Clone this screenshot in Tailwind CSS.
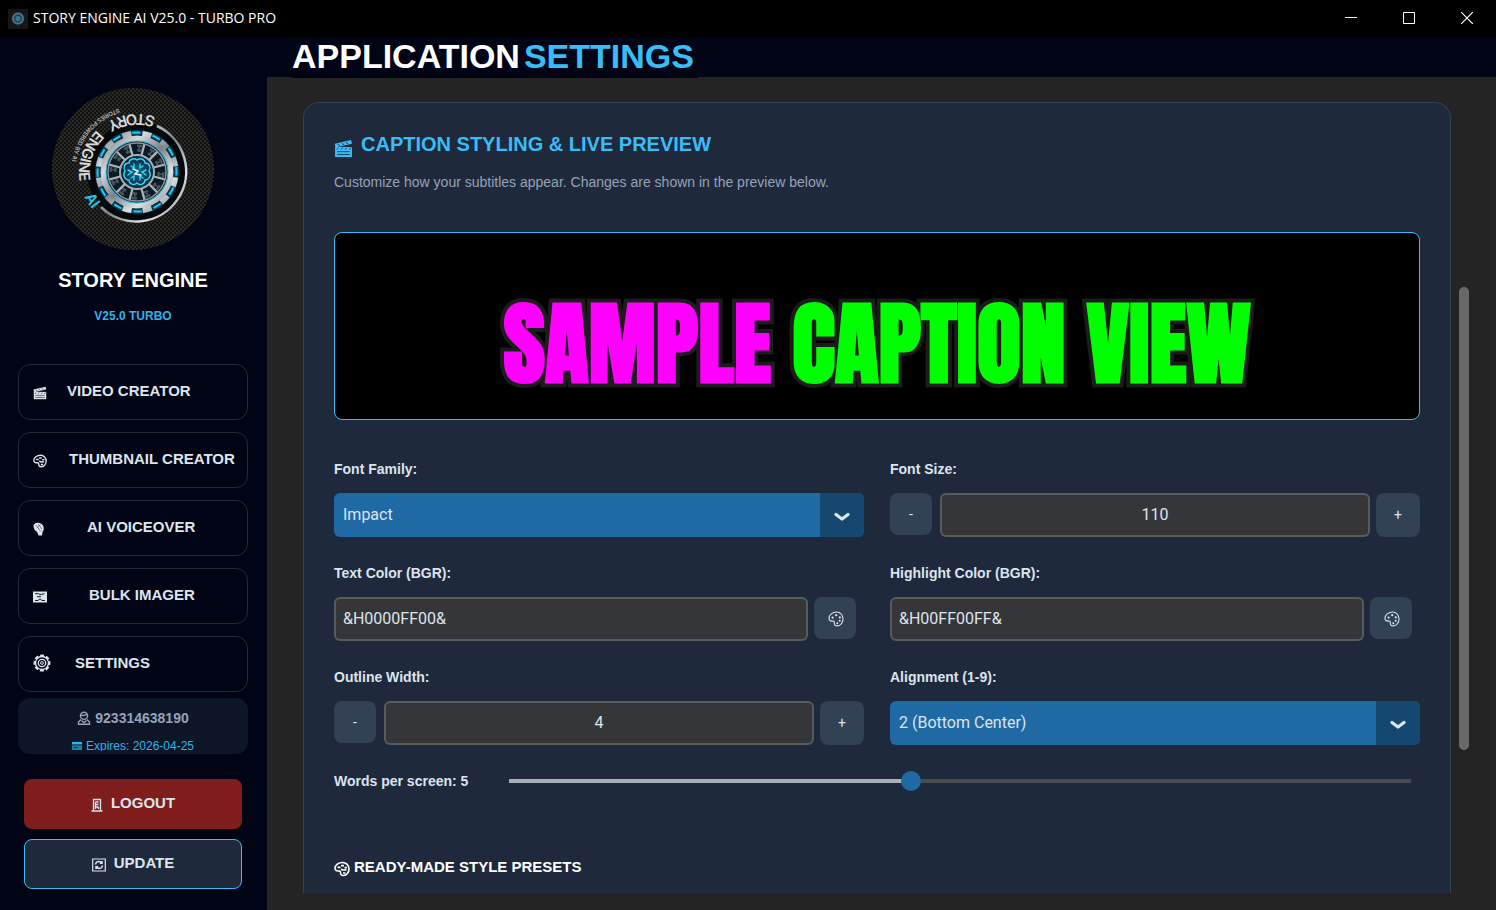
<!DOCTYPE html>
<html lang="en">
<head>
    <meta charset="UTF-8">
    <meta name="viewport" content="width=device-width, initial-scale=1.0">
    <title>STORY ENGINE AI V25.0 - TURBO PRO</title>
    <script src="https://cdn.jsdelivr.net/npm/@tailwindcss/browser@4"></script>
</head>
<body class="h-screen overflow-hidden flex flex-col bg-[#242424] font-['Liberation_Sans',Arial,sans-serif] text-[#dce4ee]">

    <!-- shared icons -->
    <svg class="hidden" aria-hidden="true">
        <symbol id="clapper" viewBox="0 0 18 18">
            <path d="M1 7.500h16V17H1z" fill="currentColor"/>
            <path d="M.6 4.600 16.200 1l.8 3.400L1.400 8z" fill="currentColor"/>
            <path d="M3.500 5.200l2.300 1.200M7.300 4.200l2.300 1.200M11.200 3.300l2.300 1.200M4 8.200 2.800 10M8 8.200 6.800 10M12 8.200 10.800 10M16 8.200 14.800 10M3 12h12M3 14.700h12" stroke="#1e293b" stroke-width=".8" fill="none"/>
        </symbol>
        <symbol id="palette" viewBox="0 0 16 16">
            <path d="M8.600 1C4.600 1 1 3.800 1 7.200c0 2.300 1.500 3 3.200 2.900 1.500-.1 2.300.1 2.100 1.500-.3 2 .9 3.400 3 3.300 3.300-.2 5.700-3.200 5.700-6.900C15 4 12.300 1 8.600 1z" fill="none" stroke="currentColor" stroke-width="1.100"/>
            <g fill="currentColor"><circle cx="4.600" cy="6.600" r="1.100"/><circle cx="8.200" cy="4.200" r="1.100"/><circle cx="11.800" cy="6.400" r="1.100"/><circle cx="11.700" cy="9.800" r="1"/><circle cx="9.300" cy="12.200" r="1"/></g>
        </symbol>
        <symbol id="palette-bold" viewBox="0 0 16 16">
            <path d="M8.600 1.500C4.600 1.500 1 4 1 7.200c0 2.100 1.500 2.900 3.200 2.800 1.500-.1 2.500.1 2.300 1.500-.2 1.900 1 3.100 2.900 3 3.200-.2 5.600-3 5.600-6.500 0-3.600-2.700-6.500-6.400-6.500z" fill="none" stroke="currentColor" stroke-width="1.600"/>
            <path d="M3.500 6.400h3M7 4.600h3M10.500 6.600h2.500M7 8.200l2 .8 3.500-.2M9 12h2.500" stroke="currentColor" stroke-width="1.700"/>
        </symbol>
        <symbol id="mic" viewBox="0 0 12 14">
            <path d="M.5 4C.5 2 2.500.5 5 .7c2.800.2 4.800 1.500 5.500 4 .6 2.200.1 4.200-1 5.300L9 13.500H5.500L4.200 10C1.800 8.500.5 6.500.5 4z" fill="currentColor"/>
            <path d="M2.800 3 7.800 9.500M5.500 2.200l3.500 5M4.500 5 7.500 2.800" stroke="#475569" stroke-width=".7"/>
        </symbol>
        <symbol id="imager" viewBox="0 0 14 12">
            <path d="M0 .5h14v11H0z" fill="currentColor"/>
            <path d="M2 2.700h3.500l1.500 1L11.500 2.700M4 5.700h4M2 9.500h3l2-1.700 2 1.700h3" stroke="#020617" stroke-width=".9" fill="none"/>
        </symbol>
        <symbol id="gear" viewBox="0 0 18 18">
            <circle cx="9" cy="9" r="7.500" fill="none" stroke="currentColor" stroke-width="2" pathLength="16" stroke-dasharray="1.300 .7" transform="rotate(-14 9 9)"/>
            <circle cx="9" cy="9" r="6.500" fill="none" stroke="currentColor" stroke-width="1.300"/>
            <circle cx="9" cy="9" r="3.700" fill="none" stroke="currentColor" stroke-width="1.300"/>
            <circle cx="9" cy="9" r="1.400" fill="none" stroke="currentColor" stroke-width="1"/>
        </symbol>
        <symbol id="chevron" viewBox="0 0 16 10">
            <path d="M2 2.500 8 7l6-4.500" fill="none" stroke="currentColor" stroke-width="3.200" stroke-linecap="round" stroke-linejoin="round"/>
        </symbol>
    </svg>

    <!-- title bar -->
    <header class="h-[37px] shrink-0 bg-black flex items-center text-white">
        <svg class="ml-2 size-5" viewBox="0 0 20 20" aria-hidden="true">
            <rect width="20" height="20" fill="#151716"/>
            <circle cx="10" cy="9.500" r="6.500" fill="#28414d"/>
            <circle cx="10" cy="9.500" r="5" fill="none" stroke="#56798a" stroke-width="1.500"/>
            <circle cx="10" cy="9.500" r="2.500" fill="#2a7f9e"/>
        </svg>
        <span class="ml-[5px] pb-px grow text-sm font-['Open_Sans','Noto_Sans',sans-serif]">STORY ENGINE AI V25.0 - TURBO PRO</span>
        <div class="h-full flex pb-px">
            <button class="w-[58px] h-full flex items-center justify-center" aria-label="Minimize">
                <svg class="size-3" viewBox="0 0 12 12"><path d="M0 5.500h12" stroke="#fff"/></svg>
            </button>
            <button class="w-[58px] h-full flex items-center justify-center" aria-label="Maximize">
                <svg class="size-3" viewBox="0 0 12 12"><path d="M.5.500h11v11H.5z" fill="none" stroke="#fff"/></svg>
            </button>
            <button class="w-[58px] h-full flex items-center justify-center" aria-label="Close">
                <svg class="size-3" viewBox="0 0 12 12"><path d="M0 0l12 12M12 0 0 12" stroke="#fff" stroke-width="1.200"/></svg>
            </button>
        </div>
    </header>

    <div class="grow min-h-0 flex">
        <!-- sidebar -->
        <aside class="w-[267px] shrink-0 bg-[#000414] flex flex-col items-center pt-[51px] pr-px">
            <svg class="size-[162px] shrink-0" viewBox="0 0 162 162" role="img" aria-label="Story Engine AI logo">
                <defs>
                    <pattern id="mesh" width="4" height="4" patternUnits="userSpaceOnUse">
                        <rect width="4" height="4" fill="#121211"/>
                        <rect width="2" height="2" fill="#2b2b29"/>
                        <rect x="2" y="2" width="2" height="2" fill="#262624"/>
                    </pattern>
                    <linearGradient id="steel" x1="0" y1="0" x2="1" y2="1">
                        <stop offset="0" stop-color="#6d7478"/><stop offset=".25" stop-color="#d5dadd"/>
                        <stop offset=".5" stop-color="#7b8388"/><stop offset=".75" stop-color="#dfe3e5"/>
                        <stop offset="1" stop-color="#7f878c"/>
                    </linearGradient>
                    <radialGradient id="glow">
                        <stop offset="0" stop-color="#0b6f92"/><stop offset="1" stop-color="#03202d"/>
                    </radialGradient>
                    <!-- counter-clockwise arcs carrying the lettering -->
                    <path id="arc-in" d="M103.500 29A58 58 0 0 0 27 84A58 58 0 0 0 85 142"/>
                    <path id="arc-out" d="M67 20.500A66 66 0 0 0 19 84A66 66 0 0 0 40 132"/>
                </defs>
                <circle cx="81" cy="81" r="81" fill="url(#mesh)"/>
                <circle cx="85" cy="84" r="50" fill="#05090c"/>
                <path d="M105 38A50 50 0 1 1 49 119" fill="none" stroke="url(#steel)" stroke-width="2.500"/>
                <g transform="translate(85 84)">
                    <circle r="42" fill="#04151f"/>
                    <circle r="39.500" fill="none" stroke="#11a5d8" stroke-width="5" opacity=".3"/>
                    <circle r="37.500" fill="none" stroke="url(#steel)" stroke-width="8" pathLength="24" stroke-dasharray=".9 1.100" transform="rotate(8)"/>
                    <circle r="39.500" fill="none" stroke="#27c8f7" stroke-width="2" pathLength="24" stroke-dasharray=".8 1.200" transform="rotate(23)"/>
                    <circle r="33.500" fill="none" stroke="url(#steel)" stroke-width="6"/>
                    <circle r="31" fill="#0c1a22" stroke="#3fb4dc" stroke-width="1.100"/>
                    <circle r="24" fill="none" stroke="#46555f" stroke-width="7" pathLength="48" stroke-dasharray="1.600 2.400"/>
                    <circle r="24" fill="none" stroke="#0e1d27" stroke-width="2.500" pathLength="96" stroke-dasharray="1 1"/>
                    <g stroke="#aeb5b9" stroke-width="2.200" transform="rotate(15)">
                        <path d="M0-29V29M-29 0H29M-25-14.500 25 14.500M-14.500-25 14.500 25M14.500-25-14.500 25M25-14.500-25 14.500"/>
                    </g>
                    <circle r="29" fill="none" stroke="#8b949a" stroke-width="1.500"/>
                    <circle r="17" fill="url(#glow)" stroke="#a5adb2" stroke-width="2"/>
                    <g fill="none" stroke="#35d6ff" stroke-width="1.400" stroke-linecap="round">
                        <path d="M0-12C-4-15-8-12-8-9-13-9-14-4-12-1-15 3-12 8-8 8-8 12-3 14 0 11 3 14 8 12 8 8 12 8 15 3 12-1 14-4 13-9 8-9 8-12 4-15 0-12z"/>
                        <path d="M-3-8v4l-3-2M3-8v4l3-2M-9-2l4 2-4 3M9-2 5 0l4 3M-3 8V4l-3 2M3 8V4l3 2"/>
                        <path d="M-4-3 1-1-2 2 4 3" stroke="#d9fbff" stroke-width="1.600"/>
                    </g>
                </g>
                <g class="font-[Inter,sans-serif]">
                    <g font-size="15" font-weight="600" fill="#d6d8d8">
                        <text><textPath href="#arc-in">STORY</textPath></text>
                        <text><textPath href="#arc-in" startOffset="63">ENGINE</textPath></text>
                        <text fill="#27c4e8"><textPath href="#arc-in" startOffset="135">AI</textPath></text>
                    </g>
                    <text font-size="6" font-weight="600" fill="#b4b6b6"><textPath href="#arc-out">STORIES POWERED BY AI</textPath></text>
                </g>
            </svg>
            <h2 class="mt-4.5 text-xl leading-6 font-bold text-white">STORY ENGINE</h2>
            <p class="mt-3.5 text-xs leading-5 font-bold text-[#2eb2ee]">V25.0 TURBO</p>

            <nav class="mt-[38px] w-[230px] flex flex-col gap-3 text-[15px] leading-5 font-bold">
                <a href="#" class="h-14 flex items-center gap-5 pl-3.5 pb-0.5 border border-[#1e293b] rounded-xl"><svg class="mt-1 size-3.5"><use href="#clapper"/></svg>VIDEO CREATOR</a>
                <a href="#" class="h-14 flex items-center gap-[22px] pl-3.5 pb-0.5 border border-[#1e293b] rounded-xl whitespace-nowrap"><svg class="mt-1 size-3.5"><use href="#palette-bold"/></svg>THUMBNAIL CREATOR</a>
                <a href="#" class="h-14 flex items-center gap-[42px] pl-3.5 pb-0.5 border border-[#1e293b] rounded-xl"><svg class="mt-1 w-3 h-3.5"><use href="#mic"/></svg>AI VOICEOVER</a>
                <a href="#" class="h-14 flex items-center gap-[42px] pl-3.5 pb-0.5 border border-[#1e293b] rounded-xl"><svg class="mt-1 w-3.5 h-3"><use href="#imager"/></svg>BULK IMAGER</a>
                <a href="#" class="h-14 flex items-center gap-6 pl-3.5 pb-0.5 border border-[#1e293b] rounded-xl"><svg class="size-4.5"><use href="#gear"/></svg>SETTINGS</a>
            </nav>

            <div class="mt-1.5 w-[230px] h-14 shrink-0 overflow-hidden bg-[#0d1627] rounded-xl pt-2.5 flex flex-col items-center">
                <p class="flex items-center gap-1 text-sm leading-5 font-bold text-[#94a3b8]">
                    <svg class="size-3.5" viewBox="0 0 14 14" fill="none" stroke="currentColor" stroke-width="1.400" aria-hidden="true"><circle cx="7" cy="4.800" r="3.600"/><path d="M3.800 4.200c2 .6 4.500.2 6.400-1M4 8.500 1.500 11v2.300h11V11L10 8.500M4.500 9.500l2.500 2 2.500-2"/></svg>
                    923314638190
                </p>
                <div class="mt-2 h-[15px] overflow-hidden">
                    <p class="flex items-center gap-1 text-xs leading-5 text-[#2eb2ee]">
                        <svg class="w-2.5 h-2" viewBox="0 0 10 8" aria-hidden="true"><path d="M0 0h10v8H0z" fill="#1d7ea6"/><path d="M0 0h10v2H0z" fill="currentColor"/><path d="M0 3h10M1.500 5.500h4" stroke="#0f3a55"/></svg>
                        Expires: 2026-04-25
                    </p>
                </div>
            </div>

            <button class="mt-[25px] w-[218px] h-[50px] shrink-0 pb-0.5 bg-[#7f1d1d] rounded-lg flex items-center justify-center gap-2 text-[15px] leading-5 font-bold">
                <svg class="mt-1 w-3 h-3.5" viewBox="0 0 12 14" fill="none" stroke="currentColor" stroke-width="1.300" aria-hidden="true"><path d="M2.500 13V1.500h7V13M.5 13h11M4.500 4h3M4.500 6.500h3M4.500 9h3M4.500 4v7M7.500 9v2"/></svg>
                LOGOUT
            </button>
            <button class="mt-2.5 w-[218px] h-[50px] shrink-0 pb-0.5 bg-[#1e293b] border border-[#38bdf8] rounded-lg flex items-center justify-center gap-2 text-[15px] leading-5 font-bold">
                <svg class="mt-1 size-3.5" viewBox="0 0 14 14" fill="none" stroke="currentColor" aria-hidden="true"><path d="M.7 1h12.600v12H.7z" stroke-width="1.200"/><path d="M3.500 6.500C3.800 4.500 5 3.600 7 3.600c1.200 0 2 .4 2.800 1.400M10.500 7.500c-.3 2-1.500 2.900-3.500 2.900-1.200 0-2-.4-2.800-1.400M10 3v2.300H7.800M4 11V8.700h2.200" stroke-width="1.500"/></svg>
                UPDATE
            </button>
        </aside>

        <!-- settings page -->
        <main class="grow min-w-0 flex flex-col">
            <div class="h-10 shrink-0 bg-[#000414] pl-[25px]">
                <h1 class="w-fit flex gap-1 pr-1 pb-0.5 bg-[#000414] text-[34px] leading-[39px] font-bold text-white"><span>APPLICATION</span><span class="text-[#38bdf8]">SETTINGS</span></h1>
            </div>
            <div class="grow min-h-0 flex mt-[25px] mb-[17px] pl-9 pr-[27px]">
                <section class="grow min-w-0 overflow-hidden bg-[#1e293b] border border-b-0 border-[#334155] rounded-t-2xl px-[30px] pt-[29px]">
                    <h2 class="h-6 flex items-center gap-2 text-xl leading-6 font-bold text-[#38bdf8]"><svg class="mt-2 size-[19px]"><use href="#clapper"/></svg>CAPTION STYLING &amp; LIVE PREVIEW</h2>
                    <p class="mt-4 text-sm leading-5 text-[#94a3b8]">Customize how your subtitles appear. Changes are shown in the preview below.</p>

                    <div class="mt-10 h-[188px] bg-black border border-[#38bdf8] rounded-lg flex items-center justify-center pt-9 overflow-hidden">
                        <p class="whitespace-nowrap text-[90px] leading-none font-black font-[Impact,Anton,'Noto_Sans_ExtraCondensed','Open_Sans_Condensed','Liberation_Sans_Narrow','Roboto_Condensed','DejaVu_Sans_Condensed',sans-serif] text-[#00ff00] [paint-order:stroke] [-webkit-text-stroke:8px_#1c1c1c]"><span class="text-[#ff00ff]">SAMPLE</span> CAPTION VIEW</p>
                    </div>

                    <form class="mt-[39px]">
                        <div class="grid grid-cols-2 gap-[26px] text-sm leading-5">
                            <div>
                                <label for="font" class="font-bold block">Font Family:</label>
                                <div class="relative mt-3.5">
                                    <select id="font" class="appearance-none w-full h-11 pl-[9px] pr-12 rounded-md bg-[#1f6aa5] text-base font-[Roboto,sans-serif]"><option>Impact</option></select>
                                    <span class="absolute inset-y-0 right-0 w-11 rounded-r-md bg-[#144870] flex items-center justify-center pt-1 pointer-events-none"><svg class="w-4 h-2.5"><use href="#chevron"/></svg></span>
                                </div>
                            </div>
                            <div>
                                <label for="size" class="font-bold block">Font Size:</label>
                                <div class="mt-3.5 flex">
                                    <button type="button" class="size-[42px] rounded-lg bg-[#334155] font-[Roboto,sans-serif]">-</button>
                                    <input id="size" type="text" value="110" class="ml-2 grow min-w-0 h-11 pb-0.5 rounded-md border-2 border-[#565b5e] bg-[#343638] text-center text-base font-[Roboto,sans-serif]">
                                    <button type="button" class="ml-1.5 size-11 rounded-lg bg-[#334155] font-[Roboto,sans-serif]">+</button>
                                </div>
                            </div>
                            <div>
                                <label for="text-color" class="font-bold block">Text Color (BGR):</label>
                                <div class="mt-3.5 pr-2 flex gap-1.5">
                                    <input id="text-color" type="text" value="&amp;H0000FF00&amp;" class="grow min-w-0 h-11 pl-[7px] pb-0.5 rounded-md border-2 border-[#565b5e] bg-[#343638] text-base font-[Roboto,sans-serif]">
                                    <button type="button" class="size-[42px] rounded-lg bg-[#334155] flex items-center justify-center pl-0.5 pt-0.5" aria-label="Pick text color"><svg class="size-4"><use href="#palette"/></svg></button>
                                </div>
                            </div>
                            <div>
                                <label for="highlight-color" class="font-bold block">Highlight Color (BGR):</label>
                                <div class="mt-3.5 pr-2 flex gap-1.5">
                                    <input id="highlight-color" type="text" value="&amp;H00FF00FF&amp;" class="grow min-w-0 h-11 pl-[7px] pb-0.5 rounded-md border-2 border-[#565b5e] bg-[#343638] text-base font-[Roboto,sans-serif]">
                                    <button type="button" class="size-[42px] rounded-lg bg-[#334155] flex items-center justify-center pl-0.5 pt-0.5" aria-label="Pick highlight color"><svg class="size-4"><use href="#palette"/></svg></button>
                                </div>
                            </div>
                            <div>
                                <label for="outline" class="font-bold block">Outline Width:</label>
                                <div class="mt-3.5 flex">
                                    <button type="button" class="size-[42px] rounded-lg bg-[#334155] font-[Roboto,sans-serif]">-</button>
                                    <input id="outline" type="text" value="4" class="ml-2 grow min-w-0 h-11 pb-0.5 rounded-md border-2 border-[#565b5e] bg-[#343638] text-center text-base font-[Roboto,sans-serif]">
                                    <button type="button" class="ml-1.5 size-11 rounded-lg bg-[#334155] font-[Roboto,sans-serif]">+</button>
                                </div>
                            </div>
                            <div>
                                <label for="align" class="font-bold block">Alignment (1-9):</label>
                                <div class="relative mt-3.5">
                                    <select id="align" class="appearance-none w-full h-11 pl-[9px] pr-12 rounded-md bg-[#1f6aa5] text-base font-[Roboto,sans-serif]"><option>2 (Bottom Center)</option></select>
                                    <span class="absolute inset-y-0 right-0 w-11 rounded-r-md bg-[#144870] flex items-center justify-center pt-1 pointer-events-none"><svg class="w-4 h-2.5"><use href="#chevron"/></svg></span>
                                </div>
                            </div>
                        </div>
                        <div class="mt-[26px] flex items-center pr-[9px] text-sm leading-5">
                            <label for="words" class="w-[175px] shrink-0 font-bold">Words per screen: 5</label>
                            <input id="words" type="range" min="1" max="10" value="5" class="appearance-none grow min-w-0 h-1 bg-[linear-gradient(to_right,#aab0b5_44.4%,#4a4d50_44.4%)] [&::-webkit-slider-thumb]:appearance-none [&::-webkit-slider-thumb]:size-5 [&::-webkit-slider-thumb]:rounded-full [&::-webkit-slider-thumb]:bg-[#1f6aa5]">
                        </div>
                    </form>

                    <h3 class="mt-[66px] flex items-center gap-1 text-[15px] leading-5 font-bold text-white"><svg class="mt-1 size-4"><use href="#palette-bold"/></svg>READY-MADE STYLE PRESETS</h3>
                </section>
                <!-- scroll thumb -->
                <div class="ml-2 w-2.5 shrink-0 flex flex-col">
                    <div class="grow-[185]"></div>
                    <div class="grow-[463] rounded-full bg-[#696969]"></div>
                    <div class="grow-[143]"></div>
                </div>
            </div>
        </main>
    </div>
</body>
</html>
